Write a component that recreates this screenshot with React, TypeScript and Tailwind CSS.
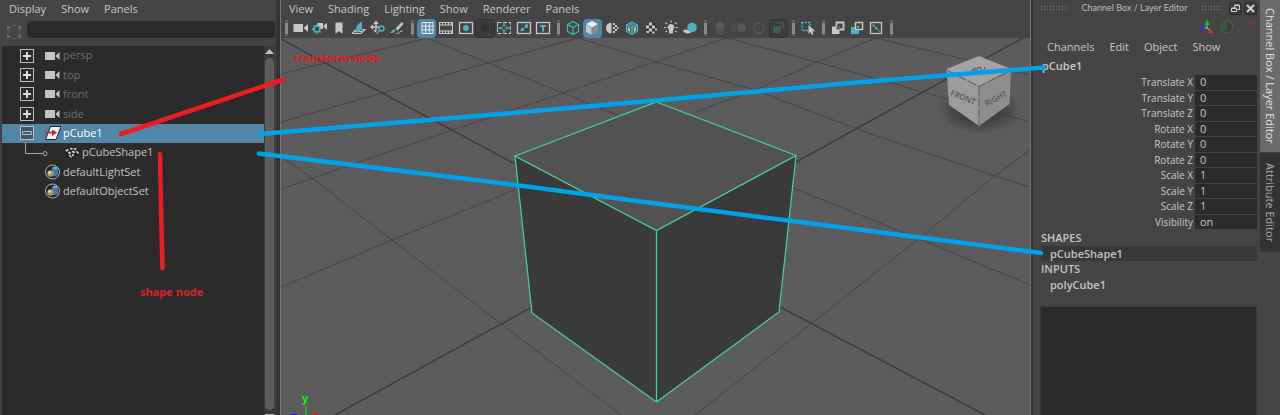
import { useState } from "react";
import type { ReactNode } from "react";

interface ITool {
  name: string;
  icon: ReactNode;
  on?: boolean;
  pressed?: boolean;
}

interface INode {
  name: string;
  kind: "camera" | "transform" | "mesh" | "set";
  expander?: "plus" | "minus";
  dim?: boolean;
}

const nodes: INode[] = [
  { name: "persp", kind: "camera", expander: "plus", dim: true },
  { name: "top", kind: "camera", expander: "plus", dim: true },
  { name: "front", kind: "camera", expander: "plus", dim: true },
  { name: "side", kind: "camera", expander: "plus", dim: true },
  { name: "pCube1", kind: "transform", expander: "minus" },
  { name: "pCubeShape1", kind: "mesh" },
  { name: "defaultLightSet", kind: "set" },
  { name: "defaultObjectSet", kind: "set" },
];

const channels = [
  ["Translate X", "0"],
  ["Translate Y", "0"],
  ["Translate Z", "0"],
  ["Rotate X", "0"],
  ["Rotate Y", "0"],
  ["Rotate Z", "0"],
  ["Scale X", "1"],
  ["Scale Y", "1"],
  ["Scale Z", "1"],
  ["Visibility", "on"],
];

const TEAL = "#4ab3c0";
const LIGHT = "#c8c8c8";

// --- Toolbar icons, all drawn on a 20x20 grid ---
const frame = <rect x="3.5" y="4.5" width="13" height="11" fill="none" stroke={LIGHT} strokeWidth="1.3" />;

const toolGroups: { width: string; tools: ITool[] }[] = [
  {
    width: "w-[116px]",
    tools: [
      { name: "Select camera", icon: <path d="M2.500 6h9.500v8H2.500zM12.500 10l4.500-4v8z" fill={LIGHT} /> },
      {
        name: "Camera attributes",
        icon: (
          <>
            <path d="M7 5h6v6H9zM13 8l4-3v7z" fill={LIGHT} />
            <circle cx="7" cy="11" r="3" fill="#444" stroke={TEAL} strokeWidth="1.6" />
            <path d="M7 6v2M7 14v2M2 11h2M3.500 7.500l1.300 1.300M3.500 14.500l1.300-1.300M10.500 14.500l-1.300-1.300" stroke={TEAL} strokeWidth="1.300" />
          </>
        ),
      },
      { name: "Bookmark", icon: <path d="M6.500 4.500h7v11.500l-3.500-3-3.500 3z" fill={LIGHT} /> },
      {
        name: "Image plane",
        icon: (
          <>
            <path d="M3 15.500h9l4-4h-3M3 15.500l4-4M6 13.500h7" fill="none" stroke={LIGHT} strokeWidth="1.200" />
            <path d="M7.500 8l5.500-5v8.500l-5.500 4z" fill={TEAL} />
          </>
        ),
      },
      {
        name: "2D pan and zoom",
        icon: (
          <>
            <path d="M8 4v9M3 9h9M6 6l2-2.500L10 6M5 7l-2 2 2 2M6 12l2 2" fill="none" stroke={LIGHT} strokeWidth="1.300" />
            <circle cx="13.500" cy="10.500" r="2.500" fill="#444" stroke={TEAL} strokeWidth="1.500" />
            <path d="M11.500 12.500L8.500 16" stroke={TEAL} strokeWidth="1.600" />
          </>
        ),
      },
      {
        name: "Grease pencil",
        icon: (
          <>
            <path d="M15 4L8.500 10.500l2 2L16.500 6z" fill={LIGHT} />
            <path d="M2.500 15c2 0 2-4 5-3.500 2 1 0 4-5 3.500z" fill={TEAL} />
            <path d="M9.500 15.500c3.500 0 2.500-2.500 6-2.500" fill="none" stroke={LIGHT} />
          </>
        ),
      },
    ],
  },
  {
    width: "w-[136px]",
    tools: [
      {
        name: "Grid",
        on: true,
        icon: <path d="M5 4.500h11v11H5zM5 8.200h11M5 11.800h11M8.700 4.500v11M12.300 4.500v11" fill="none" stroke="#eee" />,
      },
      {
        name: "Film gate",
        icon: (
          <>
            <rect x="3" y="4" width="14" height="12" fill={LIGHT} />
            <rect x="4" y="7.500" width="12" height="5" fill="#444" />
            <path d="M4 5.800h12M4 14.300h12" stroke="#444" strokeWidth="1.600" strokeDasharray="2 1" />
          </>
        ),
      },
      { name: "Resolution gate", icon: <>{frame}<circle cx="10" cy="10" r="3" fill={TEAL} /></> },
      { name: "Gate mask", pressed: true, icon: <circle cx="10" cy="10" r="4" fill="#323232" /> },
      {
        name: "Field chart",
        icon: (
          <>
            <rect x="3.500" y="4.500" width="13" height="11" fill="none" stroke={LIGHT} strokeDasharray="4 1.500" />
            <path d="M10 4v4M10 12v4M3 10h5M12 10h5" stroke={TEAL} strokeWidth="1.500" />
            <path d="M8 8h4v4H8z" fill="none" stroke={TEAL} strokeDasharray="1 1" />
          </>
        ),
      },
      {
        name: "Safe action",
        icon: <>{frame}<path d="M6 13l2-4 2.500 4z" fill={TEAL} /><circle cx="12.500" cy="8" r="1.900" fill={TEAL} /><path d="M9 11l2-2" stroke={TEAL} /></>,
      },
      { name: "Safe title", icon: <>{frame}<path d="M7 8h6M10 8v5.500" stroke={TEAL} strokeWidth="2" /></> },
    ],
  },
  {
    width: "w-[137px]",
    tools: [
      {
        name: "Wireframe",
        icon: <path d="M10 3.500l5.500 3v7L10 16.500l-5.500-3v-7zM4.500 6.500L10 9.500l5.500-3M10 9.500v7" fill="none" stroke={TEAL} strokeWidth="1.200" />,
      },
      {
        name: "Smooth shade",
        on: true,
        icon: (
          <>
            <path d="M10 3l6 3-6 3.500L4 6z" fill="#f0f0f0" />
            <path d="M4 6.500l5.500 3.500v7L4 14z" fill="#c6c6c6" />
            <path d="M16 6.500L10.500 10v7l5.500-3z" fill="#8d8d8d" />
          </>
        ),
      },
      {
        name: "Default material",
        icon: (
          <>
            <path d="M9.500 4.500a5.500 5.500 0 000 11z" fill={LIGHT} />
            <path d="M11 5h2v2h-2zM13 7h2v2h-2zM11 9h2v2h-2zM13 11h2v2h-2zM11 13h2v2h-2zM15 9h1.500v2H15z" fill={LIGHT} />
          </>
        ),
      },
      {
        name: "Wireframe on shaded",
        icon: (
          <>
            <path d="M10 4l5.500 3v6.500L10 16.500l-5.500-3V7z" fill="#5a6668" stroke={TEAL} strokeWidth="1.200" />
            <path d="M4.500 7L10 10l5.500-3M10 10v6M7.300 5.500l5.500 3v6" fill="none" stroke={TEAL} />
            <path d="M6 9.500l2 1v3l-2-1zM14 9.500l-2 1v3l2-1z" fill={LIGHT} />
          </>
        ),
      },
      {
        name: "Textured",
        icon: (
          <>
            <circle cx="10" cy="10" r="5.500" fill="#333" />
            <path d="M8 4.500h3v3H8zM5 7.500h3v3H5zM11 7.500h3v3h-3zM8 10.500h3v3H8zM14 10.500h2v2h-2zM11 13.500h2.500v2H11zM5 13h3v2H6z" fill={LIGHT} />
          </>
        ),
      },
      {
        name: "Use all lights",
        icon: (
          <>
            <path d="M10 6a3.300 3.300 0 00-2 6v3.500h4V12a3.300 3.300 0 00-2-6z" fill={LIGHT} />
            <path d="M10 2.500v2M3 9.500h2.500M14.500 9.500H17M4.500 4.500L6 6M15.500 4.500L14 6M4.500 14L6 12.700M15.500 14L14 12.700" stroke={LIGHT} strokeWidth="1.200" />
          </>
        ),
      },
      {
        name: "Shadows",
        icon: (
          <>
            <path d="M3 12.500c2-2 6-1 8 2-3 2-7 1-8-2z" fill={LIGHT} />
            <circle cx="12" cy="9.500" r="4.800" fill={TEAL} />
          </>
        ),
      },
    ],
  },
  {
    width: "w-[78px]",
    tools: [
      {
        name: "Ambient occlusion",
        icon: <><circle cx="10" cy="8" r="4" fill="#5a5a5a" /><path d="M5 12l5 2 5-2M6 14.500l4 1.500 4-1.500" fill="none" stroke="#3f5c5f" strokeWidth="1.500" /></>,
      },
      {
        name: "Motion blur",
        icon: <><circle cx="12.500" cy="9.500" r="4.300" fill="#5a5a5a" /><path d="M7 5.500a5 5 0 000 8M4.500 5.500a5 5 0 000 8" fill="none" stroke="#5a5a5a" /></>,
      },
      {
        name: "Anti-aliasing",
        icon: <><circle cx="10" cy="10" r="5" fill="none" stroke="#5a5a5a" strokeWidth="1.500" strokeDasharray="4 1" /><path d="M5.500 13a5 5 0 008 1.500" fill="none" stroke="#3f6468" strokeWidth="1.600" /></>,
      },
      {
        name: "Depth of field",
        pressed: true,
        icon: <><path d="M9 4h7v7h-2V6H9z" fill="#4d4d4d" /><path d="M5 8h8v7H5z" fill="#3c5b5e" /></>,
      },
    ],
  },
  {
    width: "w-[20px]",
    tools: [
      {
        name: "Isolate select",
        icon: (
          <>
            <rect x="4" y="4.500" width="8" height="8" fill="none" stroke={TEAL} strokeWidth="1.300" strokeDasharray="2 1" />
            <path d="M10.500 7v9l2-2 1.500 3 1.500-1-1.300-2.500 2.800-.5z" fill={LIGHT} />
          </>
        ),
      },
    ],
  },
  {
    width: "w-[58px]",
    tools: [
      {
        name: "X-ray",
        icon: <><path d="M8.500 4.500h7v7h-7z" fill="none" stroke={LIGHT} strokeWidth="1.800" /><path d="M4 8.500h7.500V16H4z" fill={LIGHT} /><path d="M8.500 8.500h3v3h-3z" fill="#555" /></>,
      },
      {
        name: "X-ray active",
        icon: <><path d="M8.500 4.500h7v7h-7z" fill="none" stroke={LIGHT} strokeWidth="1.500" /><path d="M4 9h4v3h4v4H4z" fill={TEAL} /><path d="M10 8h2v2h-2z" fill={TEAL} /></>,
      },
      {
        name: "X-ray joints",
        icon: <><rect x="4.500" y="4.500" width="11" height="11" fill="none" stroke={LIGHT} strokeWidth="1.300" /><path d="M6.500 6.500h2v2h-2zM9 9h2.500v2.500H9z" fill={TEAL} /><path d="M7 7l7 7" stroke={TEAL} /></>,
      },
    ],
  },
];

function MenuBar({ items }: { items: string[] }) {
  return (
    <nav className="flex gap-[15px] text-[11px] leading-[18px] text-[#c8c8c8]">
      {items.map((item) => (
        <button key={item} type="button" className="hover:text-white">
          {item}
        </button>
      ))}
    </nav>
  );
}

function Separator() {
  return (
    <div className="flex w-[10px] justify-center">
      <div className="flex h-4 w-[3px] items-center bg-[#5e5e5e]">
        <div className="h-[11px] w-[3px] bg-[#8a8a8a]" />
      </div>
    </div>
  );
}

function NodeIcon({ kind }: { kind: INode["kind"] }) {
  return (
    <svg viewBox="0 0 16 16" className="size-4 shrink-0" aria-hidden="true">
      {kind === "camera" && <path d="M0 4h10v8H0zM10.500 8l4-4v8z" fill="#c4c4c4" />}
      {kind === "transform" && (
        <>
          <path d="M5.500 1.500H16L11 14.500H0.500z" fill="#f2f2f2" stroke="#222" />
          <path d="M0 7.500h8" stroke="#d3202a" strokeWidth="1.800" />
          <path d="M7 4.500l5 3-5 3.500z" fill="#d3202a" />
        </>
      )}
      {kind === "mesh" && (
        <>
          <path d="M0 4.500l6-2.500 5 .5L16 7l-1 2.500-4 1-2.500 3.500L3 11.500 2.500 8z" fill="#0e0e0e" />
          <g fill="#c6c6c6">
            <path d="M1 5l3-1.300L5 5.500 2.500 7z" />
            <path d="M5.200 3.200l2.500-.8L9.500 4 7 5z" />
            <path d="M9.500 3l2-.2L13 5l-2.200.5z" />
            <path d="M3.500 7.500l2.500-1.300 1.500 2L5 9.300z" />
            <path d="M7.500 6l2.300-.6 1.700 2-2.500 1z" />
            <path d="M11.800 6.200l2-.3 1.500 2-2.300 1z" />
            <path d="M4 10l2.300-.4L8 12l-1 1z" />
            <path d="M7.500 9.500l3-.8-1.500 3.500z" />
          </g>
        </>
      )}
      {kind === "set" && (
        <>
          <circle cx="7.500" cy="8" r="7" fill="#222" stroke="#b5b5b5" />
          <path d="M7 4l3-1.500 3 1.500v7l-3 1.500-3-1.500z" fill="#3f78ae" />
          <path d="M7 4l3-1.500 3 1.500-3 1.200z" fill="#79add8" />
          <circle cx="5.500" cy="9.500" r="3.200" fill="#a8996a" />
          <circle cx="4.700" cy="8.500" r="1.300" fill="#efe6c0" />
        </>
      )}
    </svg>
  );
}

function Expander({ type }: { type: "plus" | "minus" }) {
  return (
    <svg viewBox="0 0 14 14" className="size-[14px] shrink-0" aria-hidden="true">
      <rect x="0.500" y="0.500" width="13" height="13" fill={type === "minus" ? "#39586c" : "none"} stroke="#bdbdbd" />
      {type === "plus" ? (
        <path d="M3 7h8M7 3v8" stroke="#e0e0e0" strokeWidth="2" />
      ) : (
        <path d="M2.500 5.500h9v3h-9z" fill="none" stroke="#bdbdbd" />
      )}
    </svg>
  );
}

function Outliner() {
  const [selected, setSelected] = useState("pCube1");

  return (
    <aside className="flex w-[276px] shrink-0 flex-col pr-px pl-0.5">
      <div className="pl-[7px]">
        <MenuBar items={["Display", "Show", "Panels"]} />
      </div>
      <div className="flex h-7 items-start pt-[3px] pl-1">
        <svg viewBox="0 0 16 16" className="mt-[3px] size-4 shrink-0" aria-hidden="true">
          <path d="M1 1l4 2.500L1 6zM15 1l-4 2.500L15 6zM1 10l4 2.500L1 15zM15 10l-4 2.500L15 15z" fill="#6b6b6b" />
          <path d="M6 1.500h4M6 14.500h4M3 6v4M13 6v4" stroke="#6b6b6b" strokeDasharray="2 1" />
        </svg>
        <input
          type="text"
          aria-label="Search outliner"
          className="ml-[5px] h-[17px] min-w-0 flex-1 rounded-sm bg-[#2b2b2b] px-1 text-[11px] text-[#c8c8c8] outline-none"
        />
      </div>
      <div className="flex flex-1">
        <div className="flex-1 bg-[#2b2b2b]">
          <ul className="grid h-[155px] auto-rows-fr text-[11px]">
            {nodes.map((node) => (
              <li key={node.name} className="flex">
                <button
                  type="button"
                  onClick={() => setSelected(node.name)}
                  className={`flex w-full items-center pl-[18px] ${
                    selected === node.name ? "bg-[#5285a6] text-white" : node.dim ? "text-[#6e6e6e]" : "text-[#c4c4c4]"
                  }`}
                >
                  {node.kind === "mesh" ? (
                    <svg viewBox="0 0 30 20" className="mr-3.5 h-5 w-[30px] shrink-0" aria-hidden="true">
                      <path d="M5.500 0v10.500H23" fill="none" stroke="#a8a8a8" />
                      <circle cx="25" cy="10.500" r="2" fill="none" stroke="#a8a8a8" />
                    </svg>
                  ) : (
                    <span className="mr-[11px] w-[14px] shrink-0">
                      {node.expander && <Expander type={node.expander} />}
                    </span>
                  )}
                  <NodeIcon kind={node.kind} />
                  <span className="pl-0.5">{node.name}</span>
                </button>
              </li>
            ))}
          </ul>
        </div>
        {/* Scrollbar */}
        <div className="flex w-[11px] flex-col items-center bg-[#3a3a3a]">
          <svg viewBox="0 0 11 12" className="h-3 w-[11px] shrink-0" aria-hidden="true">
            <path d="M1 8l4.500-5L10 8z" fill="#c4c4c4" />
          </svg>
          <div className="w-[9px] flex-1 rounded-full bg-[#5d5d5d]" />
          <div className="mt-1 h-px w-[9px] bg-[#b0b0b0]" />
        </div>
      </div>
    </aside>
  );
}

function Scene() {
  return (
    <svg viewBox="281 38 749 377" preserveAspectRatio="xMidYMid slice" className="absolute inset-0 size-full">
      <defs>
        <radialGradient id="shade">
          <stop offset="0.500" stopColor="#333" stopOpacity="0.700" />
          <stop offset="1" stopColor="#333" stopOpacity="0" />
        </radialGradient>
      </defs>
      {/* Ground grid */}
      <g fill="none" stroke="#464646" strokeWidth="1">
        <path d="M281 74L427 38" />
        <path d="M281 122L382 93L488 63L578 38" />
        <path d="M281 189L452 130L563 93L652 63L727 38" />
        <path d="M281 287L392 240L517 189M693 113L755 90L817 62L876 38" />
        <path d="M427 38L488 63L563 93L617 115" />
        <path d="M578 38L660 63L755 90L857 129L995 176L1030 187" />
        <path d="M727 38L817 62L923 92L1030 122" />
        <path d="M876 38L1030 75" />
        <path d="M793 188L922 240L1030 285" />
        <path d="M281 157L312 178L392 240L500 323L621 415" />
        <path d="M1030 150L995 176L917 240L812 323L695 415" />
      </g>
      <g fill="none" stroke="#3f3f3f" strokeWidth="1.500">
        <path d="M281 39L325 63L382 93L452 130L515 164" />
        <path d="M1023 38L923 92L796 162" />
        <path d="M335 415L532 307M780 307L985 415" />
      </g>

      {/* Selected cube */}
      <path d="M656.500 102L796 155.500L656.500 230.500L515 156z" fill="#525252" />
      <path d="M515 156L656.500 230.500V402L532 313z" fill="#3a3a3a" />
      <path d="M796 155.500L656.500 230.500V402L779 312z" fill="#3a3a3a" />
      <path d="M532 307L585 278M780 307L727 277" stroke="#424242" />
      <path
        d="M656.500 102L796 155.500L656.500 230.500L515 156zM515 156L532 313L656.500 402L779 312L796 155.500M656.500 230.500V402"
        fill="none"
        stroke="#48d695"
        strokeWidth="1.200"
      />

      {/* View cube */}
      <ellipse cx="980" cy="110" rx="42" ry="24" fill="url(#shade)" />
      <path d="M979 56L1011 69L979 86.500L946.500 69z" fill="#a3a3a3" />
      <path d="M946.500 69L979 86.500V126L949 105z" fill="#9b9b9b" />
      <path d="M1011 69L979 86.500V126L1009.500 104z" fill="#8e8e8e" />
      <path d="M948 71L979 86.500L1010 71M979 86.500V125" fill="none" stroke="#5c5c5c" strokeDasharray="9 2" />
      <g fill="#55585c" fontSize="8" fontWeight="600" textAnchor="middle">
        <text transform="translate(962 100) rotate(22)">FRONT</text>
        <text transform="translate(997 101) rotate(-28)">RIGHT</text>
        <text transform="translate(979 67) rotate(180)">TOP</text>
      </g>

      {/* Axis marker */}
      <path d="M306 406v9" stroke="#27c227" strokeWidth="1.500" />
      <path d="M291 415h6" stroke="#1010f0" strokeWidth="2" />
      <path d="M313 415h5" stroke="#f01010" strokeWidth="2" />
      <text x="302" y="402" fontSize="11" fontWeight="700" fill="#12f012">
        y
      </text>
    </svg>
  );
}

function Viewport() {
  return (
    <main className="flex min-w-0 flex-1 flex-col border-x border-[#777]">
      <div className="pl-2">
        <MenuBar items={["View", "Shading", "Lighting", "Show", "Renderer", "Panels"]} />
      </div>
      <div className="flex h-5 items-center">
        {toolGroups.map((group, index) => (
          <div key={index} className="flex items-center">
            <Separator />
            <div className={`grid auto-cols-fr grid-flow-col ${group.width}`}>
              {group.tools.map((tool) => (
                <button
                  key={tool.name}
                  type="button"
                  aria-label={tool.name}
                  className={`flex h-[19px] items-center justify-center rounded-sm ${
                    tool.on ? "bg-[#5285a6]" : tool.pressed ? "border border-[#303030] bg-[#3c3c3c]" : ""
                  }`}
                >
                  <svg viewBox="0 0 20 20" className="size-5 shrink-0" aria-hidden="true">
                    {tool.icon}
                  </svg>
                </button>
              ))}
            </div>
          </div>
        ))}
        <Separator />
      </div>
      <div className="relative flex-1 overflow-hidden bg-[#5c5c5c]">
        <Scene />
      </div>
    </main>
  );
}

function Grip({ width }: { width: string }) {
  return (
    <div
      className={`h-[6px] bg-[radial-gradient(#808080_35%,transparent_40%)] bg-[length:3px_3px] ${width}`}
    />
  );
}

function ChannelBox() {
  return (
    <section className="flex w-[227px] shrink-0 flex-col pr-[3px] pl-[7px]">
      <header className="flex h-4 items-center text-[#bdbdbd]">
        <Grip width="w-[28px]" />
        <h2 className="flex-1 text-center font-['Lato','Open_Sans',sans-serif] text-[9px] whitespace-nowrap">
          Channel Box / Layer Editor
        </h2>
        <Grip width="w-[22px]" />
        <button type="button" aria-label="Float panel" className="ml-1.5 size-[13px] rounded-xs border border-[#2e2e2e] bg-[#3a3a3a]">
          <svg viewBox="0 0 11 11" className="size-[11px]" aria-hidden="true">
            <path d="M4.500 2.500h5v4h-2M4.500 2.500v2M1.500 5.500h5v3h-5zM1.500 5h5M4.500 2h5" fill="none" stroke="#d5d5d5" />
          </svg>
        </button>
        <button type="button" aria-label="Close panel" className="ml-0.5 size-[13px] rounded-xs border border-[#2e2e2e] bg-[#3a3a3a]">
          <svg viewBox="0 0 11 11" className="size-[11px]" aria-hidden="true">
            <path d="M2 2l7 7M9 2l-7 7" stroke="#d5d5d5" strokeWidth="2" />
          </svg>
        </button>
      </header>

      <div className="flex h-[22px] items-center justify-end gap-1 pr-0.5">
        <svg viewBox="0 0 16 16" className="size-4" aria-hidden="true">
          <path d="M8 9V4M8 9H4M8 9l4 3" stroke="#bbb" />
          <path d="M8 0l3 6H5.500z" fill="#22b033" />
          <path d="M0 9l5.500-3v5.500z" fill="#2a3fd0" />
          <path d="M14.500 14.500l-6-1 3.500-3.500z" fill="#e02a2a" />
        </svg>
        <svg viewBox="0 0 16 16" className="size-4" aria-hidden="true">
          <circle cx="8" cy="8" r="6" fill="#3e3e3e" stroke="#5c5c5c" />
          <path d="M8 3a5 5 0 000 10z" fill="#2f5a35" />
        </svg>
        <svg viewBox="0 0 16 16" className="size-4" aria-hidden="true">
          <path d="M2 14L13 3M14 2l-5 2 3 3z" stroke="#6b3e3e" fill="#6b3e3e" />
        </svg>
      </div>

      <div className="pl-[7px]">
        <MenuBar items={["Channels", "Edit", "Object", "Show"]} />
      </div>

      <h3 className="pl-0.5 text-[11px] leading-[19px] font-semibold text-[#c8c8c8]">pCube1</h3>

      <div className="grid h-[155px] auto-rows-fr text-[#c8c8c8]">
        {channels.map(([name, value]) => (
          <div key={name} className="flex items-stretch">
            <label htmlFor={name} className="flex flex-1 items-center justify-end pr-0.5 text-[10px]">
              {name}
            </label>
            <input
              id={name}
              type="text"
              defaultValue={value}
              className="w-[62px] border-b border-[#444] bg-[#2b2b2b] pl-[5px] text-[11px] outline-none"
            />
          </div>
        ))}
      </div>

      <div className="grid h-[62px] auto-rows-fr items-center pl-px text-[11px] leading-[15px] font-semibold text-[#c4c4c4]">
        <h3>SHAPES</h3>
        <button type="button" className="bg-[#373737] pl-[9px] text-left">
          pCubeShape1
        </button>
        <h3>INPUTS</h3>
        <button type="button" className="pl-[9px] text-left">
          polyCube1
        </button>
      </div>

      <div className="mt-3.5 flex-1 border border-b-0 border-[#383838] bg-[#2b2b2b]" />
    </section>
  );
}

function SideTabs() {
  return (
    <div className="flex w-5 shrink-0 flex-col gap-px text-[11px] leading-5">
      <button type="button" className="flex h-[152px] items-center bg-[#6a6a6a] text-[#e2e2e2]">
        <span className="whitespace-nowrap [writing-mode:vertical-rl]">Channel Box / Layer Editor</span>
      </button>
      <button type="button" className="flex h-[99px] items-center bg-[#333] text-[#a8a8a8]">
        <span className="whitespace-nowrap [writing-mode:vertical-rl]">Attribute Editor</span>
      </button>
    </div>
  );
}

// Hand-drawn notes lying over the whole window
function Notes() {
  return (
    <svg viewBox="0 0 1280 415" className="pointer-events-none absolute top-0 left-0 w-full">
      <g fill="none" strokeLinecap="round" strokeLinejoin="round">
        <path d="M121 134L283 79.500M160 154L161 210L162.500 268" stroke="#ed1c24" strokeWidth="4.500" />
        <path d="M260 134L500 114L656 100.500L850 83L1044 67.500M259 153.500L500 183L656 203.500L788 220.500L917 237L1041 253" stroke="#00a2e8" strokeWidth="4.500" />
      </g>
      <g fill="#dd1f28" fontSize="11" fontWeight="700">
        <text x="294" y="62">transform node</text>
        <text x="140" y="296">shape node</text>
      </g>
    </svg>
  );
}

export default function App() {
  return (
    <div className="relative flex min-h-screen overflow-hidden bg-[#444] font-['Open_Sans','Noto_Sans',sans-serif]">
      <Outliner />
      <div className="w-1 shrink-0 bg-[#333]" />
      <Viewport />
      <div className="w-0.5 shrink-0 bg-[#333]" />
      <ChannelBox />
      <SideTabs />
      <Notes />
    </div>
  );
}
